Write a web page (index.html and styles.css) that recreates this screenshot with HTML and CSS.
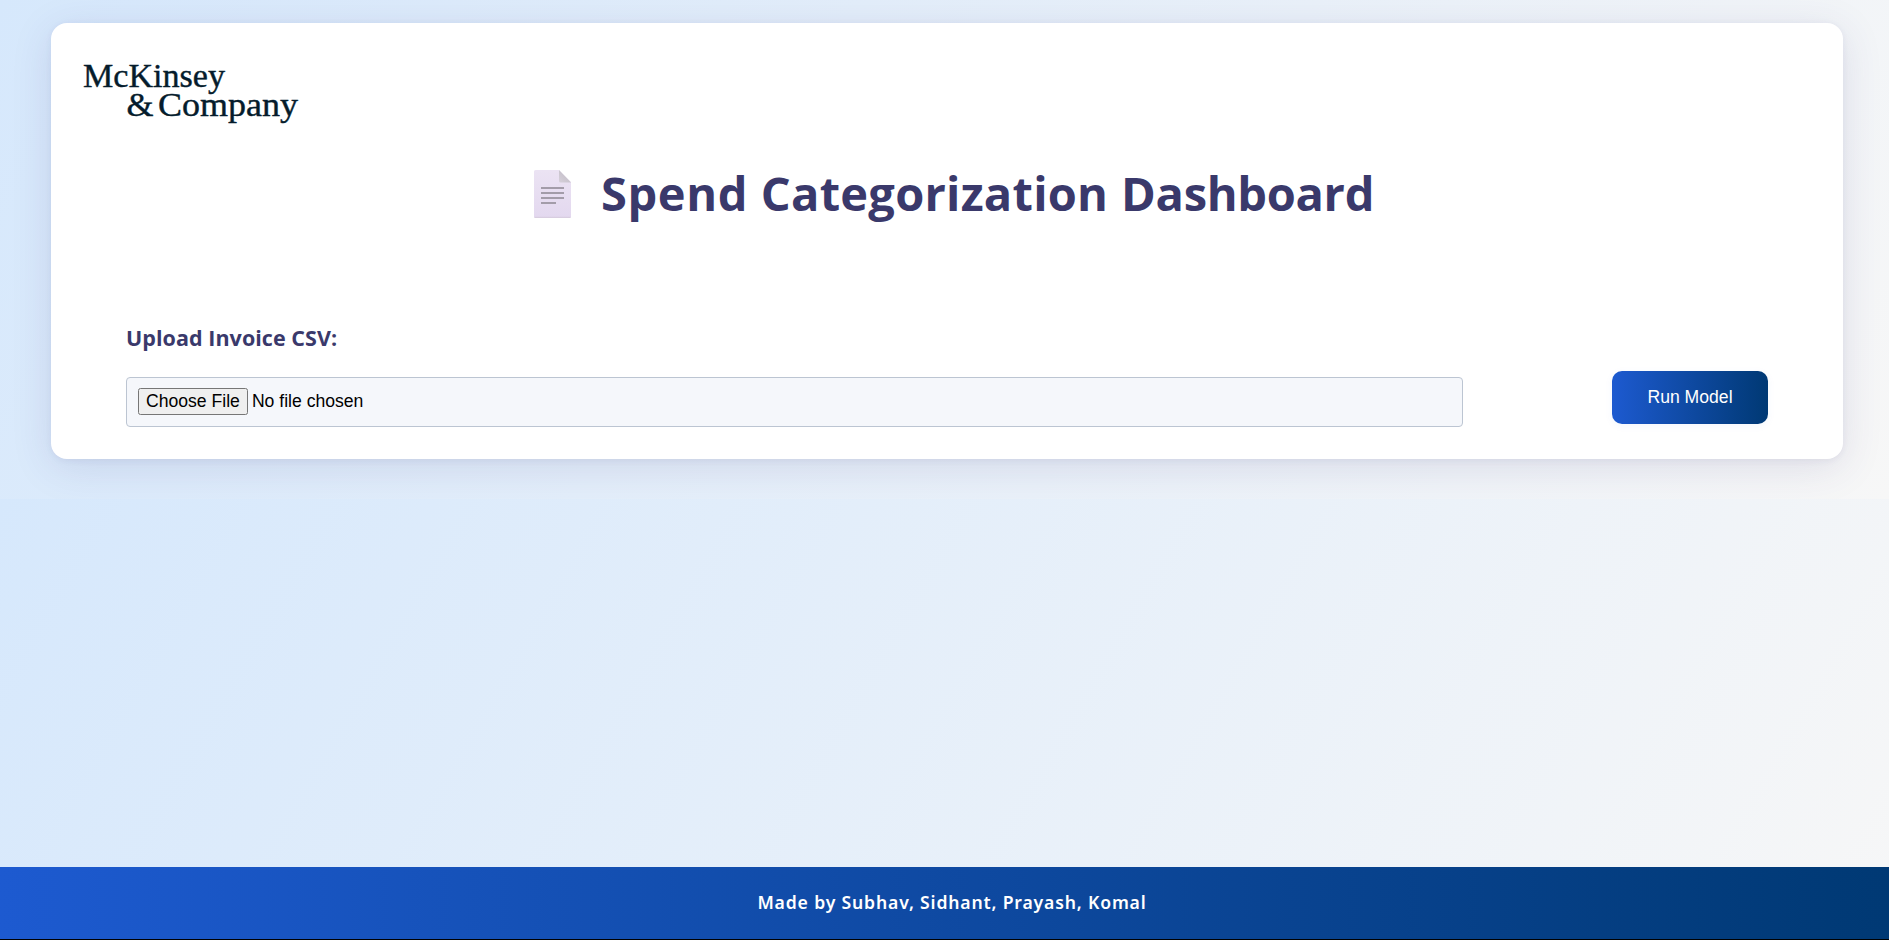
FILE: index.html
```
<!DOCTYPE html>
<html lang="en">
<head>
<meta charset="utf-8">
<title>Spend Categorization Dashboard</title>
<link rel="stylesheet" href="styles.css">
</head>
<body>
<main class="card">
  <svg class="logo" width="220" height="70" viewBox="0 0 220 70" role="img" aria-label="McKinsey &amp; Company">
    <text x="0" y="29.500" textLength="142" lengthAdjust="spacingAndGlyphs">McKinsey</text>
    <text x="43.500" y="59" textLength="27" lengthAdjust="spacingAndGlyphs">&amp;</text>
    <text x="75" y="59" textLength="140" lengthAdjust="spacingAndGlyphs">Company</text>
  </svg>
  <h1 class="title">
    <svg class="doc" width="37" height="48" viewBox="0 0 37 48" aria-hidden="true">
      <defs>
        <linearGradient id="page" x1="0" y1="0" x2="0" y2="1"><stop offset="0" stop-color="#ebe3f3"/><stop offset="1" stop-color="#e3d8ef"/></linearGradient>
        <linearGradient id="fold" x1="0" y1="1" x2="1" y2="0"><stop offset="0" stop-color="#d6d0da"/><stop offset="1" stop-color="#bdb8c1"/></linearGradient>
      </defs>
      <path d="M1.500 0H25L37 12V46.500a1.500 1.500 0 0 1-1.500 1.500h-34A1.500 1.500 0 0 1 0 46.500V1.500A1.500 1.500 0 0 1 1.500 0z" fill="url(#page)"/>
      <path d="M.5 47.300h36" stroke="#d5cbdc" stroke-width="1"/>
      <path d="M25 0L37 12.500H26.500a1.500 1.500 0 0 1-1.500-1.500z" fill="url(#fold)"/>
      <path d="M7 18H30M7 23H30M7 28H30M7 33H22" stroke="#a39ca9" stroke-width="1.800"/>
    </svg>
    <span class="title-text">Spend <span class="mid">Categorization</span> <span class="end">Dashboard</span></span>
  </h1>
  <form class="upload">
    <div class="field">
      <label class="label" for="csv">Upload Invoice CSV:</label>
      <input class="file" id="csv" type="file">
    </div>
    <button class="run" type="button">Run Model</button>
  </form>
</main>
<footer class="footer"><span class="credit">Made by Subhav, Sidhant, Prayash, Komal</span></footer>
</body>
</html>
```
FILE: styles.css
```
* { box-sizing: border-box; }
html { overflow: hidden; }
body {
  margin: 0;
  height: 499px;
  padding: 23px 46px 40px 51px;
  font-family: "Segoe UI", "Open Sans", "Noto Sans", sans-serif;
  background: linear-gradient(120deg, #d6e8fc 0%, #f7f7f7 100%);
}
.card {
  height: 436px;
  padding: 34px 75px 0 32px;
  background: #fff;
  border-radius: 16px;
  box-shadow: 0 8px 40px rgba(58, 57, 120, .13), 0 1.5px 6px rgba(58, 57, 120, .06);
}
.logo {
  display: block;
  font-family: "Liberation Serif", serif;
  font-size: 33.500px;
  fill: #051c2c;
  stroke: #051c2c;
  stroke-width: .4px;
}
.title {
  display: flex;
  align-items: center;
  gap: 30px;
  height: 66px;
  margin: 34px 0 0 451px;
  font-size: 47px;
  font-weight: 700;
  line-height: 66px;
  color: #3a396b;
  white-space: nowrap;
}
.title-text { letter-spacing: .6px; padding-bottom: 2px; }
.mid { letter-spacing: .25px; }
.end { letter-spacing: -.3px; }
.upload {
  display: flex;
  justify-content: space-between;
  align-items: flex-end;
  margin: 93px 0 0 43px;
}
.field { display: flex; flex-direction: column; width: 1337px; }
.label {
  height: 57px;
  font-size: 21.500px;
  font-weight: 700;
  letter-spacing: .05px;
  line-height: 36px;
  color: #3a396b;
}
.file {
  height: 50px;
  padding: 10px 11px;
  border: 1px solid #bcc5d2;
  border-radius: 4px;
  background: #f5f7fb;
  font: 17.600px "Liberation Sans", Arial, sans-serif;
  color: #000;
}
.run {
  width: 156px;
  height: 53px;
  margin-bottom: 3px;
  padding: 0;
  border: 0;
  border-radius: 10px;
  background: linear-gradient(90deg, #1d5ad0, #003974);
  box-shadow: 0 2px 8px rgba(30, 91, 211, .05);
  font: 17.600px "Liberation Sans", Arial, sans-serif;
  color: #fff;
}
.footer {
  position: fixed;
  left: 0;
  right: 0;
  bottom: 0;
  height: 73px;
  padding-left: 15px;
  border-bottom: 1px solid #000;
  background: linear-gradient(90deg, #1d5ad0, #003974);
  color: #fff;
  font-family: "Noto Sans", sans-serif;
  font-size: 17.600px;
  font-weight: 600;
  line-height: 71px;
  text-align: center;
}
.credit { letter-spacing: .84px; }
```
